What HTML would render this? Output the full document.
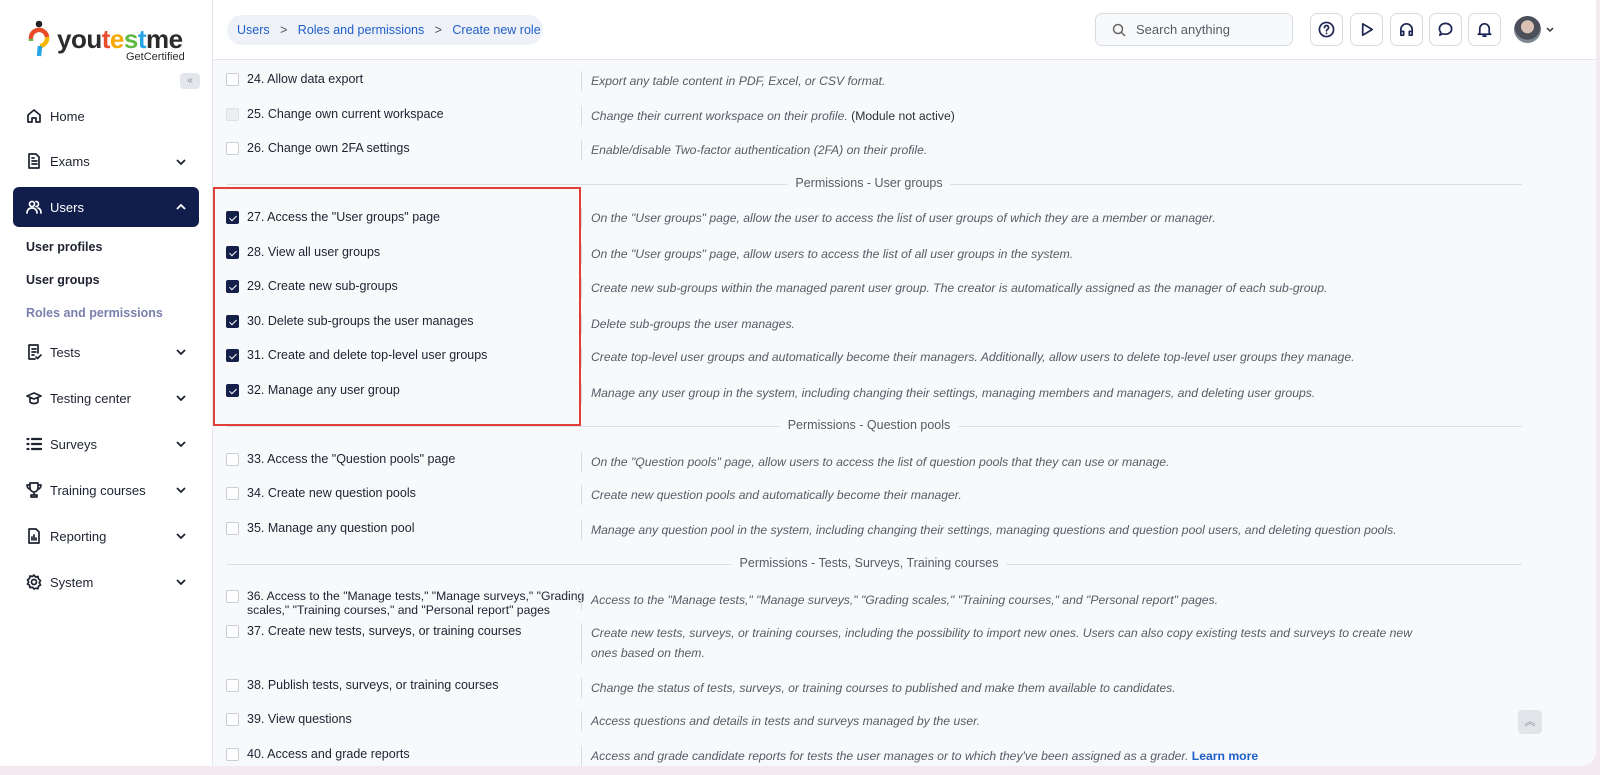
<!DOCTYPE html>
<html><head><meta charset="utf-8"><style>
*{box-sizing:border-box;margin:0;padding:0}
body{width:1600px;height:775px;overflow:hidden;background:#f3e9ef;font-family:"Liberation Sans",sans-serif;position:relative}
.frame{position:absolute;left:0;top:0;width:1596px;height:766px;background:#f8f9fb;border-radius:0 0 14px 0;overflow:hidden}
.side{position:absolute;left:0;top:0;width:213px;height:766px;background:#fff;border-right:1px solid #e3e6ec}
.hdr{position:absolute;left:213px;top:0;right:0;height:60px;background:#fff;border-bottom:1px solid #e3e6ec}
.nav{position:absolute;left:26px;font-size:13px;color:#1d2230;display:flex;align-items:center;height:20px}
.nav svg{width:16px;height:16px;margin-right:8px;fill:none;stroke:#1d2230;stroke-width:1.7;stroke-linecap:round;stroke-linejoin:round}
.chev{position:absolute;left:175px;width:12px;height:12px;fill:none;stroke:#1d2230;stroke-width:1.8}
.sub{position:absolute;left:26px;font-size:12.5px;color:#1d2230;font-weight:bold}
.ib{position:absolute;top:13px;width:33px;height:33px;border:1px solid #d7dbe2;border-radius:7px;background:#fff;display:flex;align-items:center;justify-content:center}
.ib svg{width:17px;height:17px;fill:none;stroke:#1d2552;stroke-width:1.8;stroke-linecap:round;stroke-linejoin:round}
.lab{position:absolute;left:247px;font-size:12.5px;color:#1d2230;line-height:14px;white-space:nowrap}
.cb{position:absolute;left:226px;width:13px;height:13px;border:1px solid #c9ced6;border-radius:2px;background:#fff}
.cb.on{background:#15204a;border-color:#15204a}
.cb.on:after{content:"";position:absolute;left:4px;top:1.5px;width:3px;height:6px;border:solid #fff;border-width:0 1.3px 1.3px 0;transform:rotate(45deg)}
.cb.dis{background:#eceef1;border-color:#dfe2e6}
.desc{position:absolute;left:581px;border-left:1px solid #d8dbe0;padding-left:9px;font-size:12.2px;font-style:italic;color:#555c66;line-height:20px}
.sec{position:absolute;left:227px;width:1295px;height:1px;background:#dcdfe4}
.sec span{position:absolute;top:-8px;transform:translateX(-50%);background:#f8f9fb;padding:0 8px;font-size:12.5px;color:#555c66;white-space:nowrap;line-height:15px}
</style></head><body><div class="frame">
<div class="side">
 <svg style="position:absolute;left:28px;top:20px" width="22" height="42" viewBox="0 0 22 42"><circle cx="11" cy="4" r="3.3" fill="#222"/><path d="M3 19 A8 8 0 0 1 19 17" stroke="#e94c2b" stroke-width="4.5" fill="none"/><path d="M19 17 A8 8 0 0 1 12 26" stroke="#f6b700" stroke-width="4.5" fill="none"/><path d="M12 26 L11 36" stroke="#27a4e5" stroke-width="4.5"/><path d="M3 19 L3 21" stroke="#5dbb46" stroke-width="4.5"/></svg>
 <div style="position:absolute;left:57px;top:24px;font-size:26px;font-weight:bold;letter-spacing:-0.5px;color:#2b2b2b">you<span style="color:#e94c2b">t</span><span style="color:#f6a800">e</span><span style="color:#5dbb46">s</span><span style="color:#27a4e5">t</span>me</div>
 <div style="position:absolute;left:126px;top:51px;font-size:11px;color:#2b2b2b">GetCertified</div>
 <div style="position:absolute;left:180px;top:73px;width:20px;height:16px;border-radius:4px;background:#e3e6eb;font-size:10px;color:#8a909a;text-align:center;line-height:15px">«</div>
 <div class="nav" style="top:106px"><svg viewBox="0 0 16 16"><path d="M2 14V7l6-5 6 5v7h-4v-4H6v4z"/></svg>Home</div>
 <div class="nav" style="top:151px"><svg viewBox="0 0 16 16"><path d="M3 1h7l3 3v11H3z M6 8h5M6 11h5M6 5h2"/></svg>Exams</div>
 <svg class="chev" style="top:156px" viewBox="0 0 12 12"><path d="M2 4l4 4 4-4"/></svg>
 <div style="position:absolute;left:13px;top:187px;width:186px;height:40px;background:#111d4a;border-radius:6px"></div>
 <div class="nav" style="top:197px;color:#fff"><svg viewBox="0 0 16 16" style="stroke:#fff"><circle cx="6" cy="5" r="2.5"/><path d="M1 14c0-3 2-5 5-5s5 2 5 5M10 2.5a2.5 2.5 0 0 1 0 5M12 9c2 .5 3 2.5 3 5"/></svg>Users</div>
 <svg class="chev" style="top:201px;stroke:#fff" viewBox="0 0 12 12"><path d="M2 8l4-4 4 4"/></svg>
 <div class="sub" style="top:240px">User profiles</div>
 <div class="sub" style="top:273px">User groups</div>
 <div class="sub" style="top:306px;color:#7a7fae">Roles and permissions</div>
 <div class="nav" style="top:342px"><svg viewBox="0 0 16 16"><path d="M3 1h9v8M3 1v14h6M6 5h4M6 8h4M6 11h2M10 13l1.5 1.5L15 11"/></svg>Tests</div>
 <svg class="chev" style="top:346px" viewBox="0 0 12 12"><path d="M2 4l4 4 4-4"/></svg>
 <div class="nav" style="top:388px"><svg viewBox="0 0 16 16"><path d="M1 6l7-3 7 3-7 3z M4 8v4c2 2 6 2 8 0V8"/></svg>Testing center</div>
 <svg class="chev" style="top:392px" viewBox="0 0 12 12"><path d="M2 4l4 4 4-4"/></svg>
 <div class="nav" style="top:434px"><svg viewBox="0 0 16 16"><path d="M6 3h9M6 8h9M6 13h9M1.5 3h1M1.5 8h1M1.5 13h1" stroke-width="2.2"/></svg>Surveys</div>
 <svg class="chev" style="top:438px" viewBox="0 0 12 12"><path d="M2 4l4 4 4-4"/></svg>
 <div class="nav" style="top:480px"><svg viewBox="0 0 16 16"><path d="M4 1h8v5a4 4 0 0 1-8 0z M4 3H1c0 3 2 4 3 4M12 3h3c0 3-2 4-3 4M8 10v3M5 15h6v-2H5z"/></svg>Training courses</div>
 <svg class="chev" style="top:484px" viewBox="0 0 12 12"><path d="M2 4l4 4 4-4"/></svg>
 <div class="nav" style="top:526px"><svg viewBox="0 0 16 16"><path d="M3 1h7l3 3v11H3z M6 12V9M8 12V7M10 12v-2"/></svg>Reporting</div>
 <svg class="chev" style="top:530px" viewBox="0 0 12 12"><path d="M2 4l4 4 4-4"/></svg>
 <div class="nav" style="top:572px"><svg viewBox="0 0 16 16"><circle cx="8" cy="8" r="2.5"/><path d="M8 1l1.5 2 2.5-.5.5 2.5 2 1.5-1.2 2.2 1.2 2.3-2 1.2-.5 2.5-2.5-.5L8 15l-1.5-1.8-2.5.5-.5-2.5-2-1.2L2.7 8 1.5 5.8l2-1.3.5-2.5 2.5.5z"/></svg>System</div>
 <svg class="chev" style="top:576px" viewBox="0 0 12 12"><path d="M2 4l4 4 4-4"/></svg>
</div>
<div class="hdr">
 <div style="position:absolute;left:14px;top:15px;width:316px;height:30px;background:#eef1f7;border-radius:15px;font-size:12.5px;color:#1f5fc9;line-height:30px;padding-left:10px;white-space:nowrap">Users &nbsp;&nbsp;<span style="color:#555">&gt;</span>&nbsp;&nbsp; Roles and permissions &nbsp;&nbsp;<span style="color:#555">&gt;</span>&nbsp;&nbsp; Create new role</div>
 <div style="position:absolute;left:882px;top:13px;width:198px;height:33px;border:1px solid #d7dbe2;border-radius:7px;background:#f8f9fb;font-size:13px;color:#555c66;line-height:31px;padding-left:40px">Search anything
  <svg style="position:absolute;left:16px;top:9px" width="14" height="14" viewBox="0 0 14 14" fill="none" stroke="#666" stroke-width="1.5"><circle cx="6" cy="6" r="4.5"/><path d="M9.5 9.5L13 13"/></svg></div>
 <div class="ib" style="left:1097px"><svg viewBox="0 0 18 18"><circle cx="9" cy="9" r="7.5"/><path d="M6.8 7a2.2 2.2 0 1 1 3 2c-.7.3-.8.8-.8 1.5M9 13v.2"/></svg></div>
 <div class="ib" style="left:1137px"><svg viewBox="0 0 18 18"><path d="M5 3l10 6-10 6z"/></svg></div>
 <div class="ib" style="left:1177px"><svg viewBox="0 0 18 18"><path d="M3 12V9a6 6 0 0 1 12 0v3M3 11h3v4H3zM12 11h3v4h-3z"/></svg></div>
 <div class="ib" style="left:1216px"><svg viewBox="0 0 18 18"><path d="M9 2.5c3.8 0 6.5 2.6 6.5 5.8S12.8 14 9 14c-1 0-2-.2-2.8-.5L3 15l1-3c-.8-1-1.5-2.3-1.5-3.7C2.5 5.1 5.2 2.5 9 2.5z"/></svg></div>
 <div class="ib" style="left:1255px"><svg viewBox="0 0 18 18"><path d="M4 13V8a5 5 0 0 1 10 0v5l1.5 1h-13zM7.5 16h3"/></svg></div>
 <div style="position:absolute;left:1301px;top:16px;width:27px;height:27px;border-radius:50%;background:radial-gradient(circle at 50% 40%,#d9c2b3 0 30%,#4a4f5a 32% 60%,#7d8792 62%)"></div>
 <svg style="position:absolute;left:1333px;top:27px" width="8" height="6" viewBox="0 0 8 6" fill="none" stroke="#333" stroke-width="1.5"><path d="M1 1l3 3 3-3"/></svg>
</div>

<div class="cb" style="top:73px"></div><div class="lab" style="top:72px">24. Allow data export</div><div class="desc" style="top:71px">Export any table content in PDF, Excel, or CSV format.</div>
<div class="cb dis" style="top:108px"></div><div class="lab" style="top:107px">25. Change own current workspace</div><div class="desc" style="top:106px">Change their current workspace on their profile. <span style="font-style:normal;color:#2b2f36">(Module not active)</span></div>
<div class="cb" style="top:142px"></div><div class="lab" style="top:141px">26. Change own 2FA settings</div><div class="desc" style="top:140px">Enable/disable Two-factor authentication (2FA) on their profile.</div>
<div class="sec" style="top:184px"><span style="left:642px">Permissions - User groups</span></div>

<div class="cb on" style="top:211px"></div><div class="lab" style="top:210px">27. Access the "User groups" page</div><div class="desc" style="top:208px">On the "User groups" page, allow the user to access the list of user groups of which they are a member or manager.</div>
<div class="cb on" style="top:246px"></div><div class="lab" style="top:245px">28. View all user groups</div><div class="desc" style="top:244px">On the "User groups" page, allow users to access the list of all user groups in the system.</div>
<div class="cb on" style="top:280px"></div><div class="lab" style="top:279px">29. Create new sub-groups</div><div class="desc" style="top:278px">Create new sub-groups within the managed parent user group. The creator is automatically assigned as the manager of each sub-group.</div>
<div class="cb on" style="top:315px"></div><div class="lab" style="top:314px">30. Delete sub-groups the user manages</div><div class="desc" style="top:314px">Delete sub-groups the user manages.</div>
<div class="cb on" style="top:349px"></div><div class="lab" style="top:348px">31. Create and delete top-level user groups</div><div class="desc" style="top:347px">Create top-level user groups and automatically become their managers. Additionally, allow users to delete top-level user groups they manage.</div>
<div class="cb on" style="top:384px"></div><div class="lab" style="top:383px">32. Manage any user group</div><div class="desc" style="top:383px">Manage any user group in the system, including changing their settings, managing members and managers, and deleting user groups.</div>
<div class="sec" style="top:426px"><span style="left:642px">Permissions - Question pools</span></div>

<div class="cb" style="top:453px"></div><div class="lab" style="top:452px">33. Access the "Question pools" page</div><div class="desc" style="top:452px">On the "Question pools" page, allow users to access the list of question pools that they can use or manage.</div>
<div class="cb" style="top:487px"></div><div class="lab" style="top:486px">34. Create new question pools</div><div class="desc" style="top:485px">Create new question pools and automatically become their manager.</div>
<div class="cb" style="top:522px"></div><div class="lab" style="top:521px">35. Manage any question pool</div><div class="desc" style="top:520px">Manage any question pool in the system, including changing their settings, managing questions and question pool users, and deleting question pools.</div>
<div class="sec" style="top:564px"><span style="left:642px">Permissions - Tests, Surveys, Training courses</span></div>

<div class="cb" style="top:590px"></div><div class="lab" style="top:589px;font-size:12.2px">36. Access to the "Manage tests," "Manage surveys," "Grading<br>scales," "Training courses," and "Personal report" pages</div><div class="desc" style="top:590px">Access to the "Manage tests," "Manage surveys," "Grading scales," "Training courses," and "Personal report" pages.</div>
<div class="cb" style="top:625px"></div><div class="lab" style="top:624px">37. Create new tests, surveys, or training courses</div><div class="desc" style="top:623px;width:860px">Create new tests, surveys, or training courses, including the possibility to import new ones. Users can also copy existing tests and surveys to create new ones based on them.</div>
<div class="cb" style="top:679px"></div><div class="lab" style="top:678px">38. Publish tests, surveys, or training courses</div><div class="desc" style="top:678px">Change the status of tests, surveys, or training courses to published and make them available to candidates.</div>
<div class="cb" style="top:713px"></div><div class="lab" style="top:712px">39. View questions</div><div class="desc" style="top:711px">Access questions and details in tests and surveys managed by the user.</div>
<div class="cb" style="top:748px"></div><div class="lab" style="top:747px">40. Access and grade reports</div><div class="desc" style="top:746px">Access and grade candidate reports for tests the user manages or to which they've been assigned as a grader. <span style="color:#1f5fc9;font-style:normal;font-weight:bold">Learn more</span></div>

<div style="position:absolute;left:213px;top:187px;width:368px;height:239px;border:2px solid #e0403a"></div>
<div style="position:absolute;left:1518px;top:710px;width:24px;height:24px;border-radius:4px;background:#e1e4e8;color:#8a9099;font-size:11px;text-align:center;line-height:24px">︽</div>
</div></body></html>
